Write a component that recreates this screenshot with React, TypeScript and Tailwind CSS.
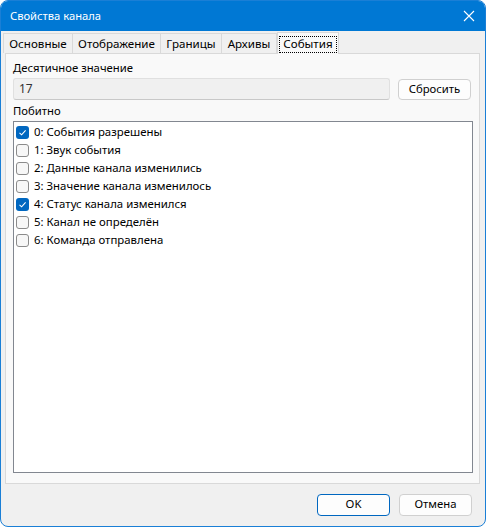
import React from "react";

const items = [
  { label: "0: События разрешены", checked: true },
  { label: "1: Звук события", checked: false },
  { label: "2: Данные канала изменились", checked: false },
  { label: "3: Значение канала изменилось", checked: false },
  { label: "4: Статус канала изменился", checked: true },
  { label: "5: Канал не определён", checked: false },
  { label: "6: Команда отправлена", checked: false },
];

function Check({ checked }: { checked: boolean }) {
  if (checked) {
    return (
      <div className="w-[13px] h-[13px] rounded-[3px] bg-[#0067c0] flex items-center justify-center shrink-0">
        <svg width="9" height="9" viewBox="0 0 9 9">
          <path d="M1.5 4.8 L3.6 6.8 L7.6 2.3" fill="none" stroke="white" strokeWidth="1.1" />
        </svg>
      </div>
    );
  }
  return <div className="w-[13px] h-[13px] rounded-[3px] border border-[#8b8b8b] bg-[#f7f7f7] shrink-0" />;
}

export default function App() {
  const tabs = [
    { t: "Основные", w: "w-[70px]" },
    { t: "Отображение", w: "w-[89px]" },
    { t: "Границы", w: "w-[62px]" },
    { t: "Архивы", w: "w-[56px]" },
  ];
  return (
    <div
      className="w-[486px] h-[527px] bg-[#f0f0f0] border border-[#1a7fd6] rounded-[8px] overflow-hidden flex flex-col text-[11.3px] text-black"
      style={{ fontFamily: '"Segoe UI", "Noto Sans", sans-serif' }}
    >
      <div className="h-[30px] bg-[#0078d4] flex items-center justify-between pl-[9px] pr-[8px] text-white shrink-0">
        <span className="text-[11.2px]">Свойства канала</span>
        <svg width="12" height="12" viewBox="0 0 12 12" className="mr-[2px]">
          <path d="M1 1 L11 11 M11 1 L1 11" stroke="white" strokeWidth="1.1" />
        </svg>
      </div>
      <div className="flex items-end pl-[2px] h-[22px] shrink-0">
        {tabs.map((x) => (
          <div
            key={x.t}
            className={`${x.w} h-[20px] border-l border-t border-r border-[#d9d9d9] bg-[#f0f0f0] flex items-center justify-center -mr-px leading-none text-[11.6px]`}
          >
            {x.t}
          </div>
        ))}
        <div className="w-[62px] h-[22px] pt-[1px] border-l border-t border-r border-[#d9d9d9] bg-[#f9f9f9] flex items-center justify-center ml-[1px] relative z-10 -mb-px leading-none text-[11.6px]">
          <span className="border border-dotted border-black px-[3px] h-[17px] flex items-center">События</span>
        </div>
      </div>
      <div className="mx-[4px] mr-[5px] flex-1 bg-[#f9f9f9] border border-[#d9d9d9] flex flex-col pl-[7px] pr-[8px] pt-[6px] pb-[10px]">
        <div className="h-[16px] flex items-center">Десятичное значение</div>
        <div className="flex items-center gap-[8px] mt-[2px]">
          <div className="flex-1 h-[22px] bg-[#f0f0f0] rounded-[3px] border border-[#e0e0e0] border-b-[#c8c8c8] flex items-center px-[5px] text-[#333] text-[12px]">
            17
          </div>
          <div className="w-[73px] h-[21px] bg-[#fdfdfd] border border-[#d0d0d0] rounded-[4px] flex items-center justify-center">
            Сбросить
          </div>
        </div>
        <div className="h-[16px] flex items-center mt-[3px]">Побитно</div>
        <div className="flex-1 mt-[2px] bg-white border border-[#828790] pt-[1px] pl-[2px] mr-[-2px] text-[11.4px]">
          {items.map((it) => (
            <div key={it.label} className="h-[18px] flex items-center gap-[5px]">
              <Check checked={it.checked} />
              <span>{it.label}</span>
            </div>
          ))}
        </div>
      </div>
      <div className="h-[42px] shrink-0 flex items-center justify-end gap-[9px] pr-[13px] pb-[1px]">
        <div className="w-[73px] h-[22px] bg-[#fdfdfd] border border-[#0067c0] rounded-[4px] flex items-center justify-center">
          OK
        </div>
        <div className="w-[73px] h-[22px] bg-[#fdfdfd] border border-[#d0d0d0] rounded-[4px] flex items-center justify-center">
          Отмена
        </div>
      </div>
    </div>
  );
}
